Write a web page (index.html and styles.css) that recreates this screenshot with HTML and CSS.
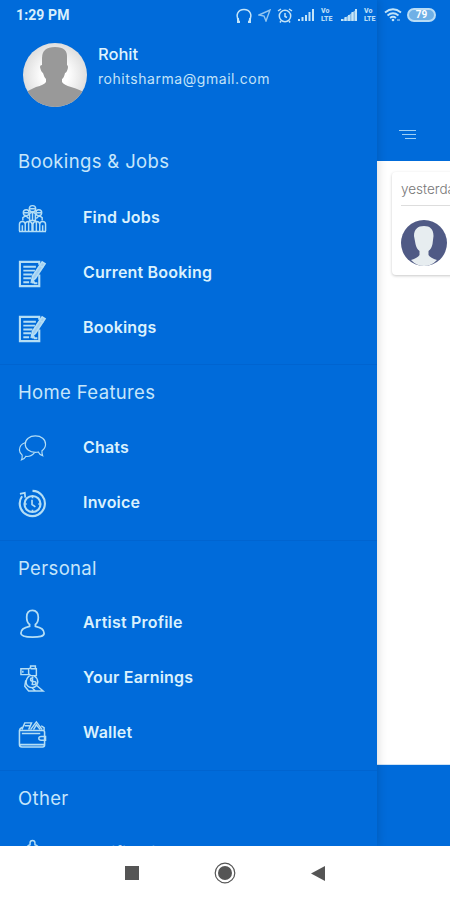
FILE: index.html
```html
<!DOCTYPE html>
<html lang="en">
<head>
<meta charset="UTF-8">
<meta name="viewport" content="width=device-width, initial-scale=1.0">
<title>Bookings</title>
<link rel="stylesheet" href="styles.css">
</head>
<body>

<!-- shared icons -->
<svg class="defs" width="0" height="0">
  <symbol id="i-jobs" viewBox="0 0 30 30">
    <circle cx="15" cy="5" r="3.3"/><circle cx="8.5" cy="9" r="3"/><circle cx="21.5" cy="9" r="3"/>
    <path d="M12 10l3-2 3 2v7h-6zM5 17v-3l3-2 3 3M25 17v-3l-3-2-3 3M15 9v8M12.5 5h5M6 9h5M19 9h5"/>
    <path d="M1.500 28v-7q0-3 3-3t3 3v7M7.500 28v-7q0-3 3.500-3t3.500 3v7M15.500 28v-7q0-3 3.500-3t3.500 3v7M22.500 28v-7q0-3 3-3t3 3v7M1 28.500h28M4.500 22v6M11 18v10M19 18v10M25.500 22v6"/>
  </symbol>
  <symbol id="i-form" viewBox="0 0 30 30">
    <path d="M22 6V3H2v25h20V16" stroke-width="2.200"/>
    <path d="M5.500 8h13M5.500 12h12M5.500 16h9.500M5.500 20h8M5.500 24h6M14 25l2-2 1 2h3" stroke-width="2"/>
    <path d="M25 3l3 2-10 15-4 3 1-5z" fill="#9fcdf0" stroke-width="1.700"/><path d="M23 7l3 2"/>
  </symbol>
  <symbol id="i-chat" viewBox="0 0 30 30">
    <path d="M18 2C12 2 7.500 5.500 7.500 10.500S12 19 18 19q1.500 0 3-.4 1 2.500 4.500 3.900-1-2.500-.7-5.200Q28.500 14.500 28.500 10.500C28.500 5.500 24 2 18 2z"/>
    <path d="M7.300 9Q1.500 11 1.500 16.500q0 3 2.800 5.300.3 2.700-.8 5 3-.5 4.500-3.600 5 .7 9-3.700"/>
  </symbol>
  <symbol id="i-time" viewBox="0 0 30 30">
    <path d="M15 2a13 13 0 1 1-10.800 5.500" stroke-width="2.200"/><path d="M2 5l5-1 .5 5" stroke-width="1.800"/>
    <circle cx="15" cy="15.500" r="8.300" stroke-width="2.200"/>
    <path d="M14.500 11v5l3.500 2.500M15 7.500v2M15 21.500v2M7 15.500h2M21 15.500h2" stroke-width="1.700"/>
  </symbol>
  <symbol id="i-user" viewBox="0 0 30 30">
    <path d="M15 1.500c-4 0-6 3-6 7 0 3 1 6 3 7.500v2C7 19 3 21 3 25c0 3.500 5 4 12 4s12-.5 12-4c0-4-4-6-9-7v-2c2-1.500 3-4.500 3-7.500 0-4-2-7-6-7z" stroke-width="1.800"/>
  </symbol>
  <symbol id="i-earn" viewBox="0 0 30 30">
    <path d="M3 5h8v6H3zM11 5l2-1V2h5v3h1v7h-6l-2-2M13 5h5M5 7v2"/>
    <path d="M12 12q-4 3-3.500 8 1 4 6.500 4.500 5-1 5.500-6-.5-4.500-4-6.500M16 14q-3 0-3 2t3 2q3 0 2.500 2t-4.500 1M15 13v9M8 17l-1 6 4 5h7M19 22l7 6h-8l-3-3"/>
  </symbol>
  <symbol id="i-wallet" viewBox="0 0 30 30">
    <path d="M2 12h24q1.500 0 1.500 2v13q0 2-2 2H4q-2.500 0-2.500-2.500V12q0-2 3-3.500M1.500 26.500h26" stroke-width="1.600"/>
    <path d="M4 11l3-7h7l-3 7M13 11l6-8 6 8M16 11l3-5 4 5M7 7h5M24 7l3 2v3"/>
    <path d="M28.500 18H24q-2.500 0-2.500 2t2.500 2h4.500zM4 15h19"/>
  </symbol>
  <symbol id="i-bell" viewBox="0 0 30 30">
    <path d="M12.500 6V4a2.500 2.500 0 0 1 5 0v2q6 2 6 10v6l3 3H4l3-3v-6q0-8 5.500-10z"/>
  </symbol>
  <symbol id="i-signal" viewBox="0 0 18 14">
    <path d="M1 13v-2M4.500 13v-4M8 13V7M11.500 13V4M15 13V1" stroke-width="2"/>
  </symbol>
</svg>

<div class="screen">
  <div class="app">

    <!-- page behind the drawer -->
    <main class="page">
      <header class="topbar">
        <svg class="menu" width="17" height="11" viewBox="0 0 17 11"><path d="M0 1.500h17M3 5.500h14M6 9.500h11"/></svg>
      </header>
      <div class="list">
        <div class="card">
          <div class="date">yesterday</div>
          <svg class="person" width="46" height="46" viewBox="0 0 46 46">
            <circle cx="23" cy="23" r="23" fill="#505a85"/>
            <path d="M13 16C13 9 17 6 23 6s9.500 3 9.500 10l-1 8q-1 5-4 7v4q2 3 8.500 5-5.500 6-13 6t-13-6q6.500-2 8.500-5v-4q-3-2-4-7z" fill="#e7edf0"/>
          </svg>
        </div>
      </div>
      <div class="bottombar"></div>
    </main>

    <!-- drawer -->
    <aside class="drawer">
      <div class="profile">
        <svg width="64" height="64" viewBox="0 0 64 64">
          <defs>
            <clipPath id="round"><circle cx="32" cy="32" r="32"/></clipPath>
            <radialGradient id="shade"><stop offset="40%" stop-color="#fff"/><stop offset="100%" stop-color="#dedede"/></radialGradient>
          </defs>
          <g clip-path="url(#round)">
            <path d="M0 0h64v64H0z" fill="url(#shade)"/>
            <path d="M19 15Q19 4 32 4t12 11v7q2 1 0 6-1 2-2 2-1 5-3 6v3q2 3 9 5 10 3 16 7v13H0V51q6-4 13-7 8-2 10-5v-3q-2-2-3-6-2-1-3-6 0-2 2-2z" fill="#999"/>
          </g>
        </svg>
        <div class="who">
          <div class="name">Rohit</div>
          <div class="mail">rohitsharma@gmail.com</div>
        </div>
      </div>

      <section>
        <h2>Bookings &amp; Jobs</h2>
        <a class="item"><svg class="icon"><use href="#i-jobs"/></svg><span>Find Jobs</span></a>
        <a class="item"><svg class="icon"><use href="#i-form"/></svg><span>Current Booking</span></a>
        <a class="item"><svg class="icon"><use href="#i-form"/></svg><span>Bookings</span></a>
      </section>
      <section>
        <h2>Home Features</h2>
        <a class="item"><svg class="icon thin"><use href="#i-chat"/></svg><span>Chats</span></a>
        <a class="item"><svg class="icon"><use href="#i-time"/></svg><span>Invoice</span></a>
      </section>
      <section>
        <h2>Personal</h2>
        <a class="item"><svg class="icon"><use href="#i-user"/></svg><span>Artist Profile</span></a>
        <a class="item"><svg class="icon"><use href="#i-earn"/></svg><span>Your Earnings</span></a>
        <a class="item"><svg class="icon"><use href="#i-wallet"/></svg><span>Wallet</span></a>
      </section>
      <section>
        <h2>Other</h2>
        <a class="item"><svg class="icon"><use href="#i-bell"/></svg><span>Notification</span></a>
      </section>
    </aside>

    <!-- status bar -->
    <div class="status">
      <span class="clock">1:29 PM</span>
      <div class="tray">
        <svg width="16" height="15" viewBox="0 0 16 15"><path d="M3 13C-1 7 2 1.500 8 1.500s9 5.500 5 11.500" stroke-width="1.500"/><path d="M2 10v4h2M14 10v4h-2" stroke-width="2"/></svg>
        <svg class="gps" width="13" height="13" viewBox="0 0 13 13"><path d="M1 6l11-5-4 11-2-5z" stroke-width="1.400"/></svg>
        <svg width="16" height="15" viewBox="0 0 16 15"><circle cx="8" cy="8" r="5.700" stroke-width="1.500"/><path d="M8 5v3.500l2 1M1 3l3-2M15 3l-3-2M4 13l-1 1.500M12 13l1 1.500" stroke-width="1.500"/></svg>
        <svg width="18" height="14"><use href="#i-signal"/></svg>
        <div class="volte"><span>Vo</span><span>LTE</span></div>
        <svg width="18" height="14"><path d="M0 13L16 1v12z" class="full"/><use href="#i-signal"/></svg>
        <div class="volte"><span>Vo</span><span>LTE</span></div>
        <svg width="18" height="14" viewBox="0 0 18 14"><path d="M1 4.500q8-6.500 16 0M3.500 7.500q5.500-4.500 11 0M6 10q3-2.500 6 0" stroke-width="1.800"/><circle cx="9" cy="12" r="1.300" class="dot"/><path d="M13 12h3"/></svg>
        <div class="battery">79</div>
      </div>
    </div>
  </div>

  <!-- system navigation -->
  <div class="sysnav">
    <svg width="14" height="14"><path d="M0 0h14v14H0z"/></svg>
    <svg width="22" height="22"><circle cx="11" cy="11" r="9.800" class="ring"/><circle cx="11" cy="11" r="7"/></svg>
    <svg width="14" height="15"><path d="M14 0v15L0 7.500z"/></svg>
  </div>
</div>
</body>
</html>
```
FILE: styles.css
```css
/* ---------- GLOBAL ---------- */
*{box-sizing:border-box;}
html,body{margin:0;padding:0;background:#fff;font-family:Inter,"Open Sans",sans-serif;}
svg{display:block;fill:none;stroke:#c3e4f8;flex-shrink:0;}
.defs{position:absolute;}

.screen{width:450px;height:900px;display:flex;flex-direction:column;overflow:hidden;}
.app{position:relative;height:846px;overflow:hidden;}

/* ---------- STATUS BAR ---------- */
.status{position:absolute;top:0;left:0;right:0;height:30px;padding:0 14px 0 16px;display:flex;align-items:center;justify-content:space-between;}
.clock{font:700 14px Roboto,sans-serif;color:#d8effc;letter-spacing:.1px;}
.tray{display:flex;align-items:center;gap:5px;}
.tray .gps{opacity:.75;margin:0 1px;}
.tray .full{fill:#86bce8;stroke:none;}
.tray .dot{fill:#c3e4f8;stroke:none;}
.volte{width:15px;display:flex;flex-direction:column;gap:1px;font:900 7px/7px Roboto,sans-serif;color:#b7dcf6;}
.volte span{height:7px;}
.battery{width:29px;height:14px;border:2px solid #b7dcf6;border-radius:7px;background:#6fb0e6;color:#fff;font:700 10px/10px Roboto,sans-serif;text-align:center;}

/* ---------- PAGE ---------- */
.page{height:100%;display:flex;flex-direction:column;padding-left:377px;background:#006bda;}
.topbar{height:161px;padding:129px 0 0 22px;}
.menu{stroke:#9ed0f5;}
.list{flex:1;background:#fff;padding:11px 0 0 15px;border-bottom:1px solid #cfe3f5;}
.card{width:90px;height:103px;padding:0 9px;border-radius:4px;background:#fff;box-shadow:0 1px 3px rgba(0,0,0,.22);}
.date{height:34px;line-height:35px;font-size:13.500px;font-weight:300;color:#777;border-bottom:1px solid #ddd;}
.person{margin-top:14px;stroke:none;}
.bottombar{height:81px;}

/* ---------- DRAWER ---------- */
.drawer{position:absolute;inset:0 auto 0 0;width:377px;background:#006bda;box-shadow:1px 0 9px rgba(0,0,0,.15);}
.profile{height:134px;padding:43px 0 0 23px;display:flex;}
.profile svg{stroke:none;}
.who{margin-left:11px;color:#dff3fe;}
.name{font-size:16.500px;line-height:22px;font-weight:500;}
.mail{font-size:14px;line-height:28px;color:#c2e2f8;letter-spacing:.55px;}

section{padding-bottom:10.300px;}
section + section{border-top:1px solid #0064d0;}
h2{margin:0;height:55px;line-height:55px;padding-left:18px;font-size:18.500px;font-weight:400;letter-spacing:.35px;color:#c6e6fa;}
section + section h2{height:54px;line-height:54px;}
.item{height:55px;display:flex;align-items:center;padding-left:18px;color:#daf1fd;font-size:16px;font-weight:600;letter-spacing:.2px;}
.item span{margin-left:35px;}
.icon{width:29px;height:29px;margin:3px 1px 0 0;stroke-width:1.500;stroke:#b4def5;}
.icon.thin{stroke-width:1.200;}

/* ---------- SYSTEM NAV ---------- */
.sysnav{height:54px;display:flex;align-items:center;justify-content:center;gap:75px;background:#fff;}
.sysnav svg{fill:#555;stroke:none;}
.sysnav .ring{fill:none;stroke:#555;stroke-width:1.200;}
```
